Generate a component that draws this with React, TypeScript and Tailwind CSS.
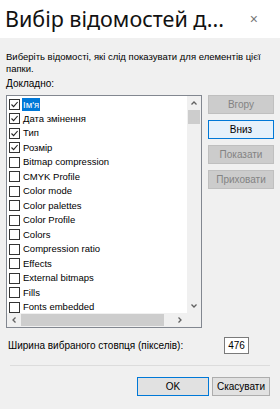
import React from 'react';

const items: { label: string; checked: boolean }[] = [
  { label: "Ім'я", checked: true },
  { label: 'Дата змінення', checked: true },
  { label: 'Тип', checked: true },
  { label: 'Розмір', checked: true },
  { label: 'Bitmap compression', checked: false },
  { label: 'CMYK Profile', checked: false },
  { label: 'Color mode', checked: false },
  { label: 'Color palettes', checked: false },
  { label: 'Color Profile', checked: false },
  { label: 'Colors', checked: false },
  { label: 'Compression ratio', checked: false },
  { label: 'Effects', checked: false },
  { label: 'External bitmaps', checked: false },
  { label: 'Fills', checked: false },
  { label: 'Fonts embedded', checked: false },
];

const Chevron = ({ dir }: { dir: 'up' | 'down' | 'left' | 'right' }) => {
  const paths = {
    up: 'M1.5 5.5 L4 3 L6.5 5.5',
    down: 'M1.5 2.5 L4 5 L6.5 2.5',
    left: 'M5.5 1.5 L3 4 L5.5 6.5',
    right: 'M2.5 1.5 L5 4 L2.5 6.5',
  };
  return (
    <svg width="8" height="8" viewBox="0 0 8 8">
      <path d={paths[dir]} fill="none" stroke="#606060" strokeWidth="1.3" />
    </svg>
  );
};

const CheckBox = ({ checked }: { checked: boolean }) => (
  <span className="w-[11px] h-[11px] border border-[#333] bg-white flex items-center justify-center shrink-0">
    {checked && (
      <svg width="9" height="9" viewBox="0 0 9 9">
        <path d="M1.5 4.5 L3.6 6.6 L7.6 2" fill="none" stroke="#222" strokeWidth="1.1" />
      </svg>
    )}
  </span>
);

const SideButton = ({ label, active }: { label: string; active?: boolean }) => (
  <div
    className={
      active
        ? 'h-[19px] flex items-center justify-center border border-[#0078d7] bg-[#e5f1fb] text-[#000]'
        : 'h-[19px] flex items-center justify-center border border-[#bfbfbf] bg-[#cccccc] text-[#838383]'
    }
  >
    {label}
  </div>
);

export default function App() {
  return (
    <div className="w-[280px] h-[409px] bg-[#f0f0f0] flex flex-col text-[10px] leading-[12px] text-[#000] overflow-hidden" style={{ fontFamily: '"Liberation Sans", Arial, sans-serif' }}>
      {/* title bar */}
      <div className="h-[38px] bg-white flex items-center justify-between pl-[5px] pr-[22px] shrink-0">
        <span className="text-[21.5px] leading-[24px] text-[#111] whitespace-nowrap" style={{ fontFamily: '"Noto Sans", sans-serif' }}>Вибір відомостей д...</span>
        <span className="text-[14px] text-[#777]">×</span>
      </div>

      <div className="px-[6px] pt-[13px] flex flex-col">
        <p className="text-[9.5px]">Виберіть відомості, які слід показувати для елементів цієї папки.</p>
        <p className="mt-[3px]">Докладно:</p>

        <div className="mt-[5px] flex gap-[6px]">
          {/* list box */}
          <div className="w-[196px] h-[233px] border border-[#828790] bg-white flex flex-col">
            <div className="flex flex-1 min-h-0">
              <div className="flex-1 pt-[1px] overflow-hidden text-[9.5px]">
                {items.map((it, i) => (
                  <div key={it.label} className="h-[14.5px] flex items-center pl-[2px] gap-[2px] whitespace-nowrap">
                    <CheckBox checked={it.checked} />
                    <span className={i === 0 ? 'bg-[#0078d7] text-white px-[1px] h-[13px] leading-[13px]' : 'px-[1px]'}>{it.label}</span>
                  </div>
                ))}
              </div>
              {/* vertical scrollbar */}
              <div className="w-[14px] bg-[#f0f0f0] flex flex-col">
                <div className="h-[14px] flex items-center justify-center"><Chevron dir="up" /></div>
                <div className="h-[14px] mx-[1px] bg-[#cdcdcd]" />
                <div className="flex-1" />
                <div className="h-[14px] flex items-center justify-center"><Chevron dir="down" /></div>
              </div>
            </div>
            {/* horizontal scrollbar */}
            <div className="h-[14px] bg-[#f0f0f0] flex">
              <div className="w-[14px] flex items-center justify-center"><Chevron dir="left" /></div>
              <div className="w-[143px] my-[1px] bg-[#cdcdcd]" />
              <div className="flex-1" />
              <div className="w-[14px] flex items-center justify-center"><Chevron dir="right" /></div>
              <div className="w-[14px] bg-[#f0f0f0]" />
            </div>
          </div>

          {/* side buttons */}
          <div className="w-[66px] flex flex-col gap-[6px]">
            <SideButton label="Вгору" />
            <SideButton label="Вниз" active />
            <SideButton label="Показати" />
            <SideButton label="Приховати" />
          </div>
        </div>

        <div className="mt-[9px] flex items-center pl-[2px] pr-[25px] justify-between">
          <span>Ширина вибраного стовпця (пікселів):</span>
          <span className="w-[25px] h-[17px] border border-[#7a7a7a] bg-white flex items-center justify-center">476</span>
        </div>

        <div className="mt-[11px] mx-[4px] h-px bg-[#dcdcdc]" />

        <div className="mt-[11px] flex justify-end gap-[3px] pr-[4px]">
          <div className="w-[72px] h-[19px] border border-[#0078d7] bg-[#e1e1e1] flex items-center justify-center">OK</div>
          <div className="w-[58px] h-[19px] border border-[#adadad] bg-[#e1e1e1] flex items-center justify-center">Скасувати</div>
        </div>
      </div>
    </div>
  );
}
